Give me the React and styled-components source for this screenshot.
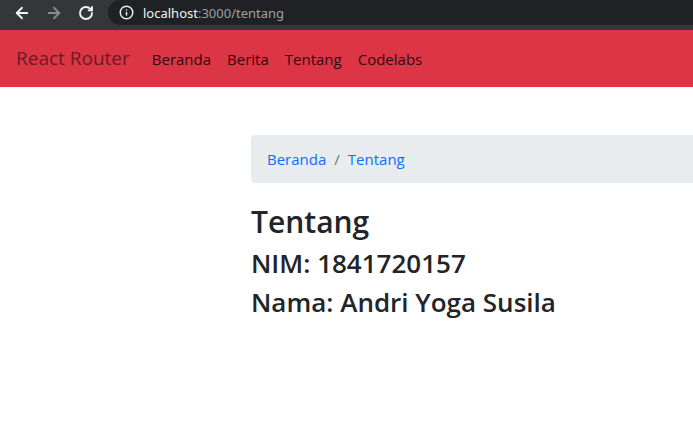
import React from 'react';
import styled, { createGlobalStyle } from 'styled-components';
import { ArrowLeft, ArrowRight, RotateCw, Info } from 'lucide-react';

const GlobalStyle = createGlobalStyle`
  html, body {
    margin: 0;
    padding: 0;
    overflow: hidden;
    background: #fff;
  }
  body {
    font-family: "Open Sans", "Noto Sans", sans-serif;
    color: #212529;
  }
`;

function App() {
  return (
    <>
      <GlobalStyle />
      <BrowserBar>
        <NavButtons>
          <IconButton><ArrowLeft size={18} strokeWidth={2.4} /></IconButton>
          <IconButton dim><ArrowRight size={18} strokeWidth={2.4} /></IconButton>
          <IconButton><RotateCw size={16} strokeWidth={2.8} /></IconButton>
        </NavButtons>
        <Omnibox>
          <Info size={15} strokeWidth={2.4} color="#e8eaed" />
          <Url>
            <Host>localhost</Host>:3000/tentang
          </Url>
        </Omnibox>
      </BrowserBar>

      <Navbar>
        <Brand href="#">React Router</Brand>
        <NavList>
          <NavLink href="#">Beranda</NavLink>
          <NavLink href="#">Berita</NavLink>
          <NavLink href="#">Tentang</NavLink>
          <NavLink href="#">Codelabs</NavLink>
        </NavList>
      </Navbar>

      <Main>
        <Breadcrumb>
          <Crumb href="#">Beranda</Crumb>
          <Divider>/</Divider>
          <Crumb href="#">Tentang</Crumb>
        </Breadcrumb>
        <Title>Tentang</Title>
        <SubTitle>NIM: 1841720157</SubTitle>
        <SubTitle>Nama: Andri Yoga Susila</SubTitle>
      </Main>
    </>
  );
}

export default App;

const BrowserBar = styled.div`
  height: 30px;
  background: #35363a;
  display: flex;
  align-items: flex-start;
`;

const NavButtons = styled.div`
  display: flex;
  align-items: center;
  height: 25px;
  padding-left: 13px;
  gap: 14px;
  width: 95px;
`;

const IconButton = styled.span`
  display: flex;
  align-items: center;
  justify-content: center;
  width: 18px;
  color: ${(p) => (p.dim ? '#8a8b8e' : '#f1f3f4')};
`;

const Omnibox = styled.div`
  flex: 1;
  height: 25px;
  background: #202124;
  border-radius: 13px 0 0 13px;
  display: flex;
  align-items: center;
  padding-left: 11px;
  gap: 9px;
`;

const Url = styled.span`
  font-family: "Noto Sans", "Open Sans", sans-serif;
  font-size: 13px;
  color: #9aa0a6;
`;

const Host = styled.span`
  color: #f1f3f4;
`;

const Navbar = styled.nav`
  background: #dc3545;
  display: flex;
  align-items: center;
  padding: 8px 16px;
  height: 57px;
  box-sizing: border-box;
`;

const Brand = styled.a`
  font-size: 19px;
  line-height: 1.5;
  color: #6b1b22;
  text-decoration: none;
  margin-right: 14px;
`;

const NavList = styled.div`
  display: flex;
`;

const NavLink = styled.a`
  font-size: 15px;
  padding: 8px 8px;
  color: #300a0e;
  text-decoration: none;
`;

const Main = styled.main`
  margin: 48px 0 0 251px;
  width: 1110px;
`;

const Breadcrumb = styled.div`
  display: flex;
  align-items: center;
  background: #e9ecef;
  border-radius: 4px;
  padding: 12px 16px;
  height: 48px;
  box-sizing: border-box;
  margin-bottom: 16px;
  font-size: 15px;
`;

const Crumb = styled.a`
  color: #0d6efd;
  text-decoration: none;
`;

const Divider = styled.span`
  color: #6c757d;
  padding: 0 8px;
`;

const Title = styled.h2`
  margin: 0 0 8px;
  padding-top: 5px;
  font-size: 30px;
  font-weight: 600;
  line-height: 1.2;
`;

const SubTitle = styled.h3`
  margin: 0 0 8px;
  font-size: 26px;
  font-weight: 600;
  line-height: 1.2;
`;
